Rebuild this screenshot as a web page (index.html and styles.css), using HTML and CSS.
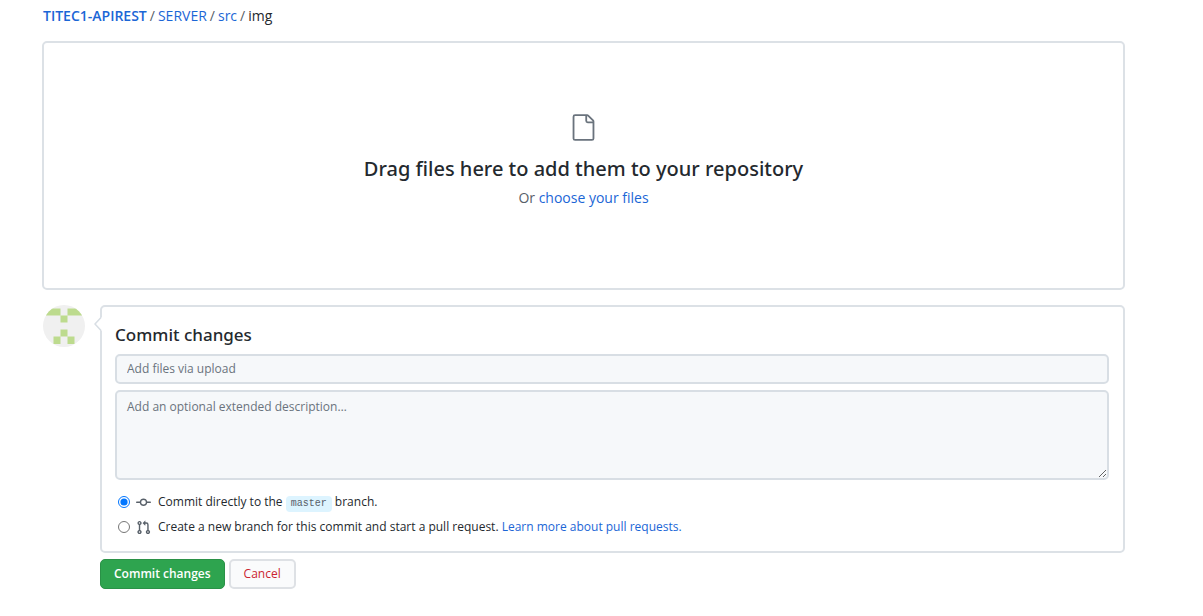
FILE: index.html
```html
<!DOCTYPE html>
<html lang="en">
<head>
<meta charset="utf-8">
<meta name="viewport" content="width=device-width, initial-scale=1">
<title>Upload files</title>
<link rel="stylesheet" href="styles.css">
</head>
<body>
<main class="page">
  <nav class="breadcrumb" aria-label="Breadcrumb">
    <a class="repo" href="#">TITEC1-APIREST</a><span>/</span><a href="#">SERVER</a><span>/</span><a href="#">src</a><span>/</span><strong class="current">img</strong>
  </nav>

  <section class="dropzone">
    <svg class="file-icon" viewBox="0 0 24 24" width="29" height="29" aria-hidden="true"><path fill-rule="evenodd" d="M5 2.500a.5.5 0 00-.5.5v18a.5.5 0 00.5.5h14a.5.5 0 00.5-.5V8.500h-4a2 2 0 01-2-2v-4H5zm10 0v4a.5.5 0 00.5.5h4a.5.5 0 00-.146-.336l-4.018-4.018A.5.5 0 0015 2.500zM3 3a2 2 0 012-2h9.982a2 2 0 011.414.586l4.018 4.018A2 2 0 0121 7.018V21a2 2 0 01-2 2H5a2 2 0 01-2-2V3z"/></svg>
    <h1 class="drop-title">Drag files here to add them to your repository</h1>
    <p class="drop-hint">Or <a href="#">choose your files</a></p>
  </section>

  <form class="commit">
    <svg class="avatar" viewBox="0 0 42 42" width="42" height="42" role="img" aria-label="Avatar">
      <defs><clipPath id="round"><circle cx="21" cy="21" r="21"/></clipPath></defs>
      <g clip-path="url(#round)">
        <path fill="#f0f0f0" d="M0 0h42v42H0z"/>
        <path fill="#bddb8e" d="M3 3.500h14.500v7H3zM24.500 3.500H39v7H24.500zM17.500 10.500h7v7h-7zM17.500 24.500h7v7h-7zM10.500 31.500h7v7.500h-7zM24.500 31.500h7v7.500h-7z"/>
      </g>
    </svg>
    <div class="commit-body">
      <div class="commit-box">
        <svg class="caret" viewBox="0 0 8 16" width="8" height="16" aria-hidden="true"><path fill="#fff" d="M8 1L1 8l7 7z"/><path fill="none" stroke="#d8dee4" stroke-width="1.500" d="M7 1.500L1 8l6 6.500"/></svg>
        <h2 class="commit-title">Commit changes</h2>
        <input class="field" type="text" aria-label="Commit summary" placeholder="Add files via upload">
        <textarea class="field description" aria-label="Extended description" placeholder="Add an optional extended description…"></textarea>
        <div class="option">
          <input type="radio" name="target" id="direct" checked>
          <svg class="icon" viewBox="0 0 16 16" width="15" height="15" aria-hidden="true"><path fill-rule="evenodd" d="M10.500 7.750a2.500 2.500 0 11-5 0 2.500 2.500 0 015 0zm1.430.75a4.002 4.002 0 01-7.860 0H.75a.75.75 0 110-1.500h3.320a4.001 4.001 0 017.860 0h3.320a.75.75 0 110 1.500h-3.320z"/></svg>
          <label for="direct">Commit directly to the <code class="branch">master</code> branch.</label>
        </div>
        <div class="option">
          <input type="radio" name="target" id="pull">
          <svg class="icon" viewBox="0 0 16 16" width="15" height="15" aria-hidden="true"><path fill-rule="evenodd" d="M7.177 3.073L9.573.677A.25.25 0 0110 .854v4.792a.25.25 0 01-.427.177L7.177 3.427a.25.25 0 010-.354zM3.750 2.500a.75.75 0 100 1.500.75.75 0 000-1.500zm-2.250.75a2.250 2.250 0 113 2.122v5.256a2.251 2.251 0 11-1.500 0V5.372A2.250 2.250 0 011.500 3.250zM11 2.500h-1V4h1a1 1 0 011 1v5.628a2.251 2.251 0 101.500 0V5A2.500 2.500 0 0011 2.500zm1 10.250a.75.75 0 111.500 0 .75.75 0 01-1.500 0zM3.750 12a.75.75 0 100 1.500.75.75 0 000-1.500z"/></svg>
          <span class="option-text"><label for="pull">Create a new branch for this commit and start a pull request.</label> <a href="#">Learn more about pull requests.</a></span>
        </div>
      </div>
      <div class="actions">
        <button class="btn primary" type="submit">Commit changes</button>
        <button class="btn danger" type="button">Cancel</button>
      </div>
    </div>
  </form>
</main>
</body>
</html>
```
FILE: styles.css
```css
* {
  box-sizing: border-box;
}

body {
  margin: 0;
  background: #fff;
  color: #24292e;
  font-family: "Open Sans", "Noto Sans", sans-serif;
  font-size: 12px;
  line-height: 18px;
}

a {
  color: #1b66d6;
  text-decoration: none;
}

.page {
  padding: 7px 78px 24px 42px;
}

.breadcrumb {
  display: flex;
  gap: 3px;
  margin: 0 0 16px 1px;
  font-size: 14px;
  color: #586069;
}

.repo {
  font-weight: 600;
}

.current {
  font-weight: 400;
  color: #24292e;
}

.dropzone {
  display: flex;
  flex-direction: column;
  align-items: center;
  padding: 70px 16px 80px;
  border: 2px solid #dce1e6;
  border-radius: 5px;
}

.file-icon {
  fill: #6a737d;
}

.drop-title {
  margin: 13px 0 5px;
  font-family: "Noto Sans", sans-serif;
  font-size: 20px;
  font-weight: 500;
  line-height: 28px;
}

.drop-hint {
  margin: 0;
  font-size: 14px;
  line-height: 20px;
  color: #586069;
}

.commit {
  display: flex;
  gap: 15px;
  margin: 15px 0 0 1px;
}

.avatar {
  flex: none;
}

.commit-body {
  flex: 1;
}

.commit-box {
  position: relative;
  display: flex;
  flex-direction: column;
  padding: 16px 14px 14px 13px;
  border: 2px solid #dce1e6;
  border-radius: 5px;
}

.caret {
  position: absolute;
  top: 9px;
  left: -8px;
}

.commit-title {
  margin: 0 0 7px;
  font-family: "Noto Sans", sans-serif;
  font-size: 17px;
  font-weight: 500;
  line-height: 24px;
}

.field {
  width: 100%;
  height: 30px;
  padding: 3px 10px 4px;
  border: 2px solid #d8dee4;
  border-radius: 5px;
  background: #f6f8fa;
  color: #24292e;
  font: inherit;
}

.field::placeholder {
  color: #6a737d;
}

.description {
  height: 90px;
  margin: 6px 0 12px;
  padding-top: 6px;
  resize: vertical;
}

.option {
  display: flex;
  align-items: center;
  height: 20px;
  margin-left: 3px;
}

.option + .option {
  margin-top: 5px;
}

.option input {
  width: 12px;
  height: 12px;
  margin: 0 6px 0 0;
}

.icon {
  margin-right: 7px;
  fill: #586069;
}

.branch {
  display: inline-block;
  padding: 0 5px;
  border-radius: 4px;
  background: #ddf4ff;
  color: #586069;
  font-family: "Liberation Mono", monospace;
  font-size: 10px;
  line-height: 16px;
}

.actions {
  display: flex;
  gap: 4px;
  margin-top: 6px;
}

.btn {
  height: 30px;
  padding: 0 13px;
  border: 1px solid #2a9147;
  border-radius: 5px;
  font: inherit;
  font-weight: 600;
}

.primary {
  background: #2ea44f;
  color: #fff;
}

.danger {
  border: 2px solid #dee1e5;
  background: #fafbfc;
  color: #cb2431;
  font-weight: 500;
}
```
